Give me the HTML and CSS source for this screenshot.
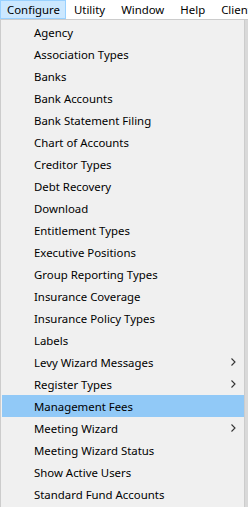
FILE: index.html
```html
<!DOCTYPE html>
<html lang="en">
<head>
  <meta charset="UTF-8" />
  <title>Configure menu</title>
  <link rel="stylesheet" href="styles.css">
</head>
<body>
  <!-- Menu bar -->
  <div class="menubar">
    <span class="menubar-item active">Configure</span>
    <span class="menubar-item">Utility</span>
    <span class="menubar-item">Window</span>
    <span class="menubar-item">Help</span>
    <span class="menubar-item">Clients</span>
  </div>

  <!-- Dropdown -->
  <div class="dropdown">
    <div class="menu-item">Agency</div>
    <div class="menu-item">Association Types</div>
    <div class="menu-item">Banks</div>
    <div class="menu-item">Bank Accounts</div>
    <div class="menu-item">Bank Statement Filing</div>
    <div class="menu-item">Chart of Accounts</div>
    <div class="menu-item">Creditor Types</div>
    <div class="menu-item">Debt Recovery</div>
    <div class="menu-item">Download</div>
    <div class="menu-item">Entitlement Types</div>
    <div class="menu-item">Executive Positions</div>
    <div class="menu-item">Group Reporting Types</div>
    <div class="menu-item">Insurance Coverage</div>
    <div class="menu-item">Insurance Policy Types</div>
    <div class="menu-item">Labels</div>
    <div class="menu-item">Levy Wizard Messages<svg class="arrow" width="5" height="8" viewBox="0 0 5 8"><path d="M0.5 0.5 L4 4 L0.5 7.5" fill="none" stroke="#333" stroke-width="1.1"/></svg></div>
    <div class="menu-item">Register Types<svg class="arrow" width="5" height="8" viewBox="0 0 5 8"><path d="M0.5 0.5 L4 4 L0.5 7.5" fill="none" stroke="#333" stroke-width="1.1"/></svg></div>
    <div class="menu-item selected">Management Fees</div>
    <div class="menu-item">Meeting Wizard<svg class="arrow" width="5" height="8" viewBox="0 0 5 8"><path d="M0.5 0.5 L4 4 L0.5 7.5" fill="none" stroke="#333" stroke-width="1.1"/></svg></div>
    <div class="menu-item">Meeting Wizard Status</div>
    <div class="menu-item">Show Active Users</div>
    <div class="menu-item">Standard Fund Accounts</div>
  </div>
</body>
</html>
```

FILE: styles.css
```css
:root {
  --bar-bg: #ffffff;
  --menu-bg: #f0f0f0;
  --border: #cccccc;
  --hover-bg: #cce8ff;
  --hover-border: #99d1ff;
  --selected: #91c9f7;
  --text: #000000;
}

* {
  box-sizing: border-box;
  margin: 0;
  padding: 0;
}

body {
  font-family: "Noto Sans", "Open Sans", sans-serif;
  font-size: 11.4px;
  color: var(--text);
  background: var(--bar-bg);
  width: 248px;
  height: 507px;
  overflow: hidden;
}

/* Menu bar */
.menubar {
  display: flex;
  height: 19px;
  white-space: nowrap;
  background: var(--bar-bg);
}

.menubar-item {
  height: 19px;
  line-height: 17px;
  padding: 0 7px;
  border: 1px solid transparent;
}

.menubar-item.active {
  padding: 0 5px 0 6px;
  background: var(--hover-bg);
  border-color: var(--hover-border);
}

/* Dropdown */
.dropdown {
  width: 248px;
  background: var(--menu-bg);
  border: 1px solid var(--border);
  border-right: none;
  padding: 1px 4px 2px 1px;
  position: relative;
}

.dropdown::after {
  content: "";
  position: absolute;
  top: 0;
  right: 0;
  width: 3px;
  height: 100%;
  background: #d9d9d9;
  border-left: 1px solid var(--border);
}

.menu-item {
  display: flex;
  align-items: center;
  justify-content: space-between;
  height: 22px;
  padding: 0 8px 0 32px;
  white-space: nowrap;
}

.menu-item.selected {
  background: var(--selected);
}

.arrow {
  flex: none;
}
```
